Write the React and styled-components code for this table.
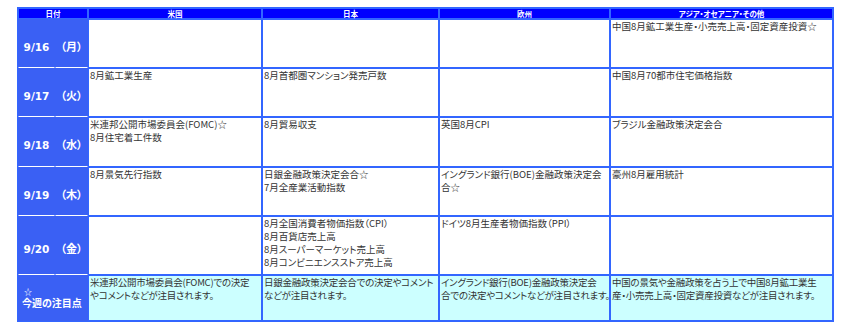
import React from 'react';
import styled, { createGlobalStyle } from 'styled-components';

const GlobalStyle = createGlobalStyle`
  body {
    margin: 0;
    background: #ffffff;
    font-family: "Noto Sans CJK JP", "Noto Sans", sans-serif;
  }
`;

const Page = styled.div`
  padding: 7px 0 0 17px;
`;

const Table = styled.table`
  table-layout: fixed;
  border-collapse: separate;
  border-spacing: 0;
  width: 815px;
  border: 1px solid #3366ff;
  font-family: "Noto Sans CJK JP", sans-serif;
  font-feature-settings: "palt";
`;

const Row = styled.tr`
  height: ${({ $h }) => $h}px;
`;

const Head = styled.th`
  background: #0000ff;
  border: 1px solid #3366ff;
  color: #ffffff;
  font-size: 7.5px;
  font-weight: 700;
  line-height: 9px;
  padding: 0;
  text-align: center;
  white-space: nowrap;
`;

const DateCell = styled.td`
  background: #3a60f4;
  border: 1px solid #3a60f4;
  border-bottom: 1px solid #ffffff;
  color: #ffffff;
  font-weight: 700;
  text-align: ${({ $left }) => ($left ? 'left' : 'center')};
  vertical-align: middle;
  padding: ${({ $left }) => ($left ? '2px 0 0 3px' : '0')};
  white-space: nowrap;
  ${({ $last }) => $last && 'border-bottom-color: #3a60f4;'}
`;

const DateNum = styled.span`
  font-family: "DejaVu Sans", sans-serif;
  font-size: 10.5px;
`;

const DayName = styled.span`
  font-size: 11px;
`;

const Focus = styled.div`
  font-size: 10px;
  line-height: 14px;
`;

const Star = styled.div`
  font-size: 8px;
  line-height: 8px;
  padding-left: 2px;
`;

const Cell = styled.td`
  background: ${({ $hl }) => ($hl ? '#ccffff' : '#ffffff')};
  border: 1px solid #3366ff;
  color: #333333;
  font-size: 9.5px;
  letter-spacing: ${({ $hl }) => ($hl ? '-0.25px' : '0')};
  line-height: 13px;
  padding: 0 1px;
  vertical-align: top;
  white-space: nowrap;
  overflow: hidden;
`;

const Line = styled.div``;

const columns = ['米国', '日本', '欧州', 'アジア・オセアニア・その他'];

const rows = [
  { date: '9/16', day: '（月）', h: 49, cells: [[], [], [], ['中国8月鉱工業生産・小売売上高・固定資産投資☆']] },
  { date: '9/17', day: '（火）', h: 49, cells: [['8月鉱工業生産'], ['8月首都圏マンション発売戸数'], [], ['中国8月70都市住宅価格指数']] },
  { date: '9/18', day: '（水）', h: 50, cells: [['米連邦公開市場委員会(FOMC)☆', '8月住宅着工件数'], ['8月貿易収支'], ['英国8月CPI'], ['ブラジル金融政策決定会合']] },
  { date: '9/19', day: '（木）', h: 49, cells: [['8月景気先行指数'], ['日銀金融政策決定会合☆', '7月全産業活動指数'], ['イングランド銀行(BOE)金融政策決定会', '合☆'], ['豪州8月雇用統計']] },
  {
    date: '9/20', day: '（金）', h: 59,
    cells: [
      [],
      ['8月全国消費者物価指数（CPI）', '8月百貨店売上高', '8月スーパーマーケット売上高', '8月コンビニエンスストア売上高'],
      ['ドイツ8月生産者物価指数（PPI）'],
      [],
    ],
  },
];

const focus = [
  ['米連邦公開市場委員会(FOMC)での決定', 'やコメントなどが注目されます。'],
  ['日銀金融政策決定会合での決定やコメント', 'などが注目されます。'],
  ['イングランド銀行(BOE)金融政策決定会', '合での決定やコメントなどが注目されます。'],
  ['中国の景気や金融政策を占う上で中国8月鉱工業生', '産・小売売上高・固定資産投資などが注目されます。'],
];

const Lines = ({ items }) => items.map((t, i) => <Line key={i}>{t}</Line>);

export default function App() {
  return (
    <Page>
      <GlobalStyle />
      <Table>
        <colgroup>
          <col style={{ width: 37 }} />
          <col style={{ width: 33 }} />
          <col style={{ width: 174 }} />
          <col style={{ width: 177 }} />
          <col style={{ width: 171 }} />
          <col style={{ width: 223 }} />
        </colgroup>
        <tbody>
          <Row $h={11}>
            <Head colSpan={2}>日付</Head>
            {columns.map((c) => (
              <Head key={c}>{c}</Head>
            ))}
          </Row>
          {rows.map((r) => (
            <Row key={r.date} $h={r.h}>
              <DateCell>
                <DateNum>{r.date}</DateNum>
              </DateCell>
              <DateCell>
                <DayName>{r.day}</DayName>
              </DateCell>
              {r.cells.map((c, i) => (
                <Cell key={i}>
                  <Lines items={c} />
                </Cell>
              ))}
            </Row>
          ))}
          <Row $h={46}>
            <DateCell colSpan={2} $left $last>
              <Star>☆</Star>
              <Focus>今週の注目点</Focus>
            </DateCell>
            {focus.map((c, i) => (
              <Cell key={i} $hl>
                <Lines items={c} />
              </Cell>
            ))}
          </Row>
        </tbody>
      </Table>
    </Page>
  );
}
